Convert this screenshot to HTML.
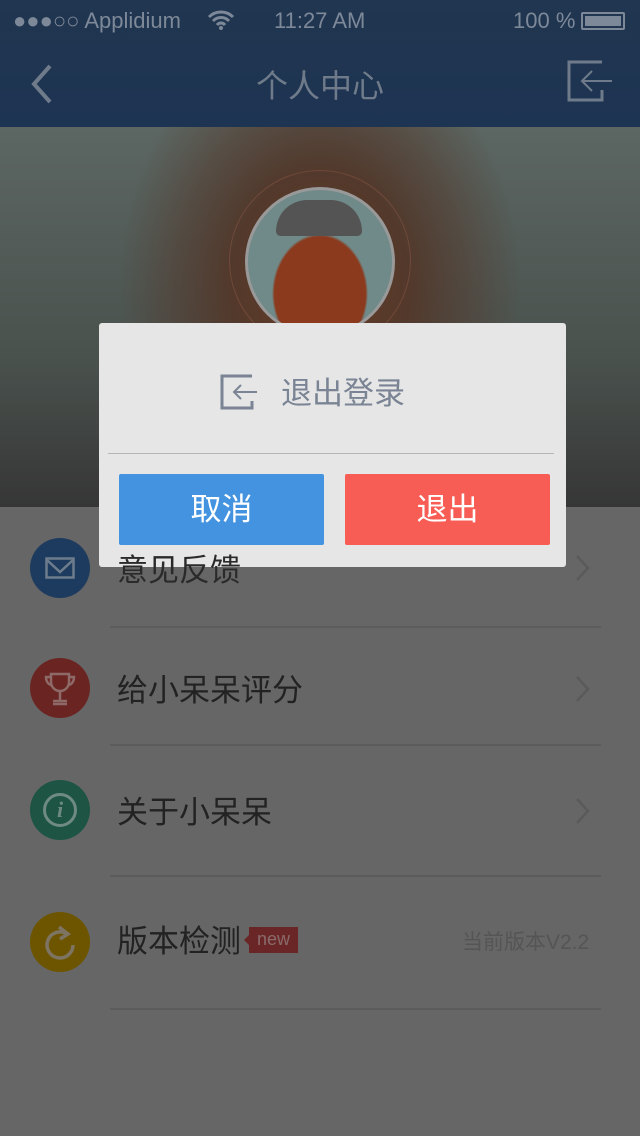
<!DOCTYPE html>
<html><head><meta charset="utf-8"><style>
*{margin:0;padding:0;box-sizing:border-box}
body{width:640px;height:1136px;background:#666;font-family:"Liberation Sans","Noto Sans CJK SC",sans-serif;position:relative;overflow:hidden}
.abs{position:absolute}
.hdr{left:0;top:0;width:640px;height:127px;background:linear-gradient(#213650,#1d3452)}
.hero{left:0;top:127px;width:640px;height:380px;background:radial-gradient(ellipse 200px 260px at 320px 160px,#6a3b24 0%,#52392c 45%,rgba(80,90,85,0) 100%),linear-gradient(#5c6662,#4a524e 60%,#363636)}
.txt{left:117px;font-size:31px;color:#222;line-height:40px}
.line{left:110px;width:491px;height:2px;background:#5c5c5c}
</style></head><body>
<div class="abs hdr"></div>
<div class="abs" style="left:13px;top:8px;font-size:22px;color:#7d8898">●●●○○ Applidium</div>
<svg class="abs" style="left:207px;top:10px" width="28" height="20" viewBox="0 0 28 20"><path d="M2 7a17 17 0 0 1 24 0M6 11a11 11 0 0 1 16 0M10 15a5 5 0 0 1 8 0" stroke="#7d8898" stroke-width="3" fill="none"/><circle cx="14" cy="18" r="2" fill="#7d8898"/></svg>
<div class="abs" style="left:274px;top:8px;font-size:22px;color:#7d8898">11:27 AM</div>
<div class="abs" style="left:513px;top:8px;font-size:22px;color:#7d8898">100 %</div>
<div class="abs" style="left:581px;top:12px;width:44px;height:18px;border:2px solid #7d8898;border-radius:2px;padding:2px"><div style="width:100%;height:100%;background:#7d8898"></div></div>
<svg class="abs" style="left:28px;top:62px" width="26" height="44"><path d="M22 4L6 22l16 18" stroke="#6f7b8a" stroke-width="4" fill="none"/></svg>
<div class="abs" style="left:0;width:640px;top:61px;text-align:center;font-size:32px;color:#6f7b8a">个人中心</div>
<svg class="abs" style="left:566px;top:58px" width="48" height="46"><path d="M36 4H3v38h33V32" stroke="#6f7b8a" stroke-width="3" fill="none"/><path d="M46 23H16M26 13l-10 10 10 10" stroke="#6f7b8a" stroke-width="2" fill="none"/></svg>
<div class="abs hero"></div>
<div class="abs" style="left:229px;top:170px;width:182px;height:182px;border-radius:50%;border:1px solid rgba(200,120,90,.25)"></div>
<div class="abs" style="left:245px;top:187px;width:150px;height:150px;border-radius:50%;border:3px solid #999;background:radial-gradient(ellipse 48px 60px at 50% 72%,#8b3a1e 0 95%,#6f8a88 100%);overflow:hidden"></div>
<div class="abs" style="left:276px;top:200px;width:86px;height:36px;border-radius:40px 40px 6px 6px;background:#545454"></div>
<div class="abs" style="left:99px;top:323px;width:467px;height:244px;background:#e6e6e6;border-radius:3px"></div>
<svg class="abs" style="left:220px;top:374px" width="38" height="36"><path d="M32 2H2v32h30V27" stroke="#7a8494" stroke-width="3" fill="none"/><path d="M37 18H14M21 11l-7 7 7 7" stroke="#7a8494" stroke-width="2" fill="none"/></svg>
<div class="abs" style="left:281px;top:368px;font-size:31px;color:#7a8494">退出登录</div>
<div class="abs" style="left:108px;top:453px;width:446px;height:1px;background:#b5b5b5"></div>
<div class="abs" style="left:119px;top:474px;width:205px;height:71px;background:#4393e0;border-radius:2px;color:#fff;font-size:31px;text-align:center;line-height:71px">取消</div>
<div class="abs" style="left:345px;top:474px;width:205px;height:71px;background:#f85d55;border-radius:2px;color:#fff;font-size:31px;text-align:center;line-height:71px">退出</div>

<div class="abs" style="left:30px;top:538px;width:60px;height:60px;border-radius:50%;background:#1c3b5e"></div>
<svg class="abs" style="left:45px;top:557px" width="30" height="22"><rect x="1.5" y="1.5" width="27" height="19" fill="none" stroke="#6d7c8d" stroke-width="2.5"/><path d="M2 3l13 12L28 3" stroke="#6d7c8d" stroke-width="2.5" fill="none"/></svg>
<div class="abs txt" style="top:551px;color:#2a2a2a">意见反馈</div>
<svg class="abs" style="left:575px;top:554px" width="16" height="28"><path d="M2 2l11 12L2 26" stroke="#5a5a5a" stroke-width="2.5" fill="none"/></svg>
<div class="abs line" style="top:626px"></div>

<div class="abs" style="left:30px;top:658px;width:60px;height:60px;border-radius:50%;background:#6a2522"></div>
<svg class="abs" style="left:43px;top:671px" width="34" height="36"><path d="M8 3h18v8a9 9 0 0 1-18 0z" fill="none" stroke="#8d6a68" stroke-width="2.5"/><path d="M8 6H3c0 5 3 8 6 8M26 6h5c0 5-3 8-6 8M17 20v9M10 30h14M10 33h14" stroke="#8d6a68" stroke-width="2.5" fill="none"/></svg>
<div class="abs txt" style="top:671px">给小呆呆评分</div>
<svg class="abs" style="left:575px;top:675px" width="16" height="28"><path d="M2 2l11 12L2 26" stroke="#5a5a5a" stroke-width="2.5" fill="none"/></svg>
<div class="abs line" style="top:744px"></div>

<div class="abs" style="left:30px;top:780px;width:60px;height:60px;border-radius:50%;background:#1d5444"></div>
<div class="abs" style="left:43px;top:793px;width:34px;height:34px;border-radius:50%;border:3px solid #6f8a82;color:#6f8a82;font:italic bold 22px 'Liberation Serif',serif;text-align:center;line-height:28px">i</div>
<div class="abs txt" style="top:793px">关于小呆呆</div>
<svg class="abs" style="left:575px;top:797px" width="16" height="28"><path d="M2 2l11 12L2 26" stroke="#5a5a5a" stroke-width="2.5" fill="none"/></svg>
<div class="abs line" style="top:875px"></div>

<div class="abs" style="left:30px;top:912px;width:60px;height:60px;border-radius:50%;background:#6d5500"></div>
<svg class="abs" style="left:43px;top:925px" width="34" height="36"><path d="M24 9A13 13 0 1 0 30 20" stroke="#7d7462" stroke-width="3.5" fill="none"/><path d="M16 2l9 7-8 5" stroke="#7d7462" stroke-width="3.5" fill="none"/></svg>
<div class="abs txt" style="top:922px">版本检测</div>
<div class="abs" style="left:249px;top:927px;width:49px;height:26px;background:#6a2626;color:#8a6b6b;font-size:18px;line-height:24px;text-align:center">new</div>
<div class="abs" style="left:244px;top:935px;width:0;height:0;border-top:5px solid transparent;border-bottom:5px solid transparent;border-right:5px solid #6a2626"></div>
<div class="abs" style="left:462px;top:926px;font-size:21px;color:#555">当前版本V2.2</div>
<div class="abs line" style="top:1008px"></div>
</body></html>
